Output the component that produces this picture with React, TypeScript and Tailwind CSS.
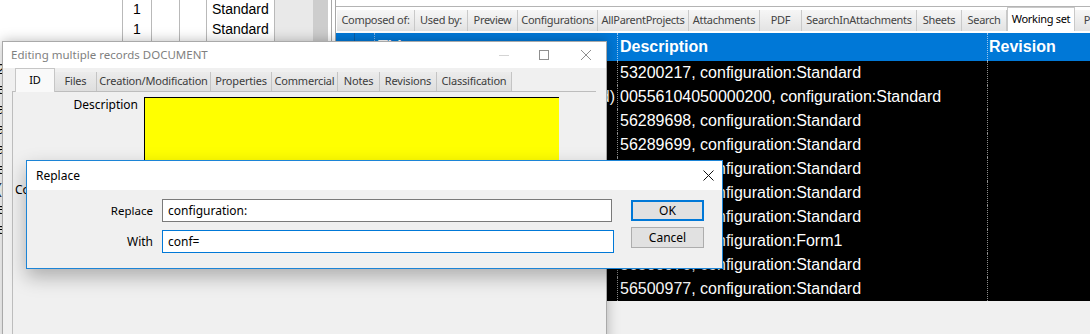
import React from "react";

const gridFont = "font-['Liberation_Sans',Arial,sans-serif]";

const topTabs = [
  { label: "Composed of:", w: 78 },
  { label: "Used by:", w: 53 },
  { label: "Preview", w: 50 },
  { label: "Configurations", w: 80 },
  { label: "AllParentProjects", w: 91 },
  { label: "Attachments", w: 71 },
  { label: "PDF", w: 42 },
  { label: "SearchInAttachments", w: 115 },
  { label: "Sheets", w: 45 },
  { label: "Search", w: 45 },
  { label: "Working set", w: 68, active: true },
  { label: "Plan", w: 40 },
];

const editTabs = [
  { label: "ID", w: 40, active: true },
  { label: "Files", w: 42 },
  { label: "Creation/Modification", w: 114 },
  { label: "Properties", w: 61 },
  { label: "Commercial", w: 66 },
  { label: "Notes", w: 42 },
  { label: "Revisions", w: 57 },
  { label: "Classification", w: 75 },
];

const rows = [
  { pre: "", desc: "53200217, configuration:Standard" },
  { pre: "(Approved)", desc: "00556104050000200, configuration:Standard" },
  { pre: "", desc: "56289698, configuration:Standard" },
  { pre: "", desc: "56289699, configuration:Standard" },
  { pre: "", desc: "56289700, configuration:Standard" },
  { pre: "", desc: "56289701, configuration:Standard" },
  { pre: "", desc: "56289702, configuration:Standard" },
  { pre: "", desc: "56289703, configuration:Form1" },
  { pre: "", desc: "56500976, configuration:Standard" },
  { pre: "", desc: "56500977, configuration:Standard" },
];

// first column of the grid behind the dialogs, only its first pixels show
const leftRows = [
  { name: "", qty: "1", type: "Standard" },
  { name: "", qty: "1", type: "Standard" },
  { name: "", qty: "1", type: "Standard" },
  { name: "2D drawing", qty: "1", type: "Standard" },
  { name: "electrical", qty: "1", type: "Standard" },
  { name: "assembly", qty: "1", type: "Standard" },
  { name: "assembly", qty: "1", type: "Standard" },
  { name: "assembly", qty: "1", type: "Standard" },
  { name: "electrical", qty: "1", type: "Standard" },
  { name: "(other)", qty: "1", type: "Standard" },
  { name: "electrical", qty: "1", type: "Standard" },
  { name: "electrical", qty: "1", type: "Standard" },
];

function LeftGrid() {
  return (
    <div className="flex w-[335px] h-full shrink-0">
      <div className={`flex w-[313px] h-full bg-white text-[14px] text-black ${gridFont}`}>
        <div className="w-[123px] border-r border-[#b9b9b9] -mt-[1px] overflow-hidden">
          {leftRows.map((r, i) => (
            <div key={i} className="h-[20px] leading-[20px] -ml-[3px] whitespace-nowrap">
              {r.name}
            </div>
          ))}
        </div>
        <div className="w-[29px] border-r border-[#b9b9b9] -mt-[1px]">
          {leftRows.map((r, i) => (
            <div key={i} className="h-[20px] leading-[20px] text-center">
              {r.qty}
            </div>
          ))}
        </div>
        <div className="w-[28px] border-r border-[#b9b9b9]" />
        <div className="w-[27px] border-r border-[#b9b9b9]" />
        <div className="w-[68px] border-r border-[#b9b9b9] -mt-[1px]">
          {leftRows.map((r, i) => (
            <div key={i} className="h-[20px] leading-[20px] pl-[5px]">
              {r.type}
            </div>
          ))}
        </div>
        <div className="flex-1 bg-[#e9e9e9]" />
      </div>
      <div className="w-[15px] bg-[#cdcdcd]" />
      <div className="w-[3px] bg-white" />
      <div className="w-[1px] bg-[#a8a8a8]" />
      <div className="w-[3px] bg-white" />
    </div>
  );
}

function RightPane() {
  return (
    <div className="flex-1 flex flex-col border-l border-[#a6a6a6] bg-white min-w-0">
      <div className="h-[6px]" />
      <div className="h-[4px] border-t border-[#b4b4b4]" />
      <div className="flex items-end h-[21px] ml-[1px] shrink-0 text-[11px] tracking-[-0.3px]">
        {topTabs.map((t) =>
          t.active ? (
            <div
              key={t.label}
              style={{ width: t.w }}
              className="h-[24px] shrink-0 bg-white border border-b-0 border-[#c9c9c9] text-black flex items-center justify-center whitespace-nowrap"
            >
              {t.label}
            </div>
          ) : (
            <div
              key={t.label}
              style={{ width: t.w }}
              className="h-[21px] shrink-0 bg-linear-to-b from-[#f6f6f6] to-[#e3e3e3] border-r border-[#c9c9c9] text-[#444] flex items-center justify-center whitespace-nowrap overflow-hidden"
            >
              {t.label}
            </div>
          )
        )}
      </div>
      <div className="h-[2px]" />
      <div className={`flex h-[28px] shrink-0 bg-[#0078d7] text-white font-bold text-[16px] ${gridFont}`}>
        <div className="w-[19px] border-r border-[#0a5fa8]" />
        <div className="w-[20px] border-r border-dotted border-[#7fb4e6]" />
        <div className="w-[242px] pl-[3px] flex items-center">Title</div>
        <div className="w-[370px] border-l border-dotted border-[#9cc6ee] pl-[2px] flex items-center">Description</div>
        <div className="flex-1 border-l border-dotted border-[#9cc6ee] pl-[1px] flex items-center">Revision</div>
      </div>
      <div className={`bg-black text-white text-[16px] ${gridFont}`}>
        {rows.map((r, i) => (
          <div key={i} className="flex h-[24px]">
            <div className="w-[19px]" />
            <div className="w-[20px]" />
            <div className="w-[242px] pr-[2px] flex items-center justify-end whitespace-nowrap overflow-hidden">
              {r.pre}
            </div>
            <div className="w-[370px] border-l border-dotted border-[#8c8c8c] pl-[2px] flex items-center whitespace-nowrap">
              {r.desc}
            </div>
            <div className="flex-1 border-l border-dotted border-[#8c8c8c]" />
          </div>
        ))}
      </div>
      <div className="flex-1 bg-[#f0f0f0]" />
    </div>
  );
}

function EditWindow() {
  return (
    <div className="absolute left-[2px] top-[41px] w-[605px] h-[320px] border border-[#a9a9a9] bg-[#f0f0f0] shadow-[0_0_12px_rgba(0,0,0,0.28)]">
      <div className="h-[26px] bg-white flex items-center">
        <span className="pl-[8px] text-[#7f7f7f] text-[11.5px]">Editing multiple records DOCUMENT</span>
        <div className="ml-auto flex items-center pr-[15px] gap-[30px]">
          <svg width="10" height="10" viewBox="0 0 10 10">
            <path d="M0 5.5 H10" stroke="#d4d4d4" strokeWidth="1" />
          </svg>
          <svg width="10" height="10" viewBox="0 0 10 10" className="mr-[2px]">
            <rect x="0.5" y="0.5" width="9" height="9" fill="none" stroke="#8f8f8f" strokeWidth="1" />
          </svg>
          <svg width="10" height="10" viewBox="0 0 10 10">
            <path d="M0 0 L10 10 M10 0 L0 10" stroke="#8f8f8f" strokeWidth="1" />
          </svg>
        </div>
      </div>
      <div className="flex items-end h-[23px] ml-[12px] text-[11px] tracking-[-0.2px]">
        {editTabs.map((t) =>
          t.active ? (
            <div
              key={t.label}
              style={{ width: t.w }}
              className="h-[24px] shrink-0 bg-[#f9f9f9] border border-b-0 border-[#c6c6c6] text-black flex items-center justify-center relative z-10 -mb-[1px]"
            >
              {t.label}
            </div>
          ) : (
            <div
              key={t.label}
              style={{ width: t.w }}
              className="h-[19px] shrink-0 bg-linear-to-b from-[#ececec] to-[#dedede] border-r border-[#c4c4c4] text-[#3c3c3c] flex items-center justify-center whitespace-nowrap"
            >
              {t.label}
            </div>
          )
        )}
      </div>
      <div className="ml-[9px] w-[584px] h-[260px] border-t border-l border-[#bdbdbd] pt-[5px]">
        <div className="flex items-start">
          <div className="w-[125px] text-right text-black leading-[16px]">Description</div>
          <div className="ml-[6px] w-[415px] h-[80px] bg-[#ffff00] border-t border-l border-black" />
        </div>
        <div className="flex items-center mt-[3px] h-[20px]">
          <div className="pl-[2px] text-black whitespace-nowrap">Commercial description</div>
        </div>
      </div>
    </div>
  );
}

function ReplaceDialog() {
  return (
    <div className="absolute left-[26px] top-[160px] w-[697px] h-[109px] border border-[#1c84d6] bg-[#f0f0f0] shadow-[0_8px_18px_rgba(0,0,0,0.28)]">
      <div className="h-[29px] bg-white flex items-center">
        <span className="pl-[9px] text-black">Replace</span>
        <svg width="11" height="11" viewBox="0 0 11 11" className="ml-auto mr-[8px]">
          <path d="M0.5 0.5 L10.5 10.5 M10.5 0.5 L0.5 10.5" stroke="#111" strokeWidth="1" />
        </svg>
      </div>
      <div className="flex">
        <div className="flex flex-col pt-[9px] gap-[8px]">
          <div className="flex items-center">
            <div className="w-[126px] text-right text-black text-[11.5px]">Replace</div>
            <div className="ml-[9px] w-[450px] h-[23px] bg-white border border-[#7a7a7a] flex items-center pl-[5px] text-black">
              configuration:
            </div>
          </div>
          <div className="flex items-center">
            <div className="w-[126px] text-right text-black">With</div>
            <div className="ml-[9px] w-[452px] h-[23px] bg-white border border-[#0078d7] flex items-center pl-[5px] text-black">
              conf=
            </div>
          </div>
        </div>
        <div className="flex flex-col ml-[17px] pt-[10px] gap-[6px]">
          <button className="w-[73px] h-[21px] bg-[#e1e1e1] border-2 border-[#0078d7] text-black flex items-center justify-center">
            OK
          </button>
          <button className="w-[73px] h-[21px] bg-[#e1e1e1] border border-[#adadad] text-black flex items-center justify-center">
            Cancel
          </button>
        </div>
      </div>
    </div>
  );
}

export default function App() {
  return (
    <div className="relative w-[1090px] h-[334px] overflow-hidden bg-[#f0f0f0] font-['Noto_Sans',sans-serif] text-[12px]">
      <div className="flex h-full">
        <LeftGrid />
        <RightPane />
      </div>
      <EditWindow />
      <ReplaceDialog />
    </div>
  );
}
